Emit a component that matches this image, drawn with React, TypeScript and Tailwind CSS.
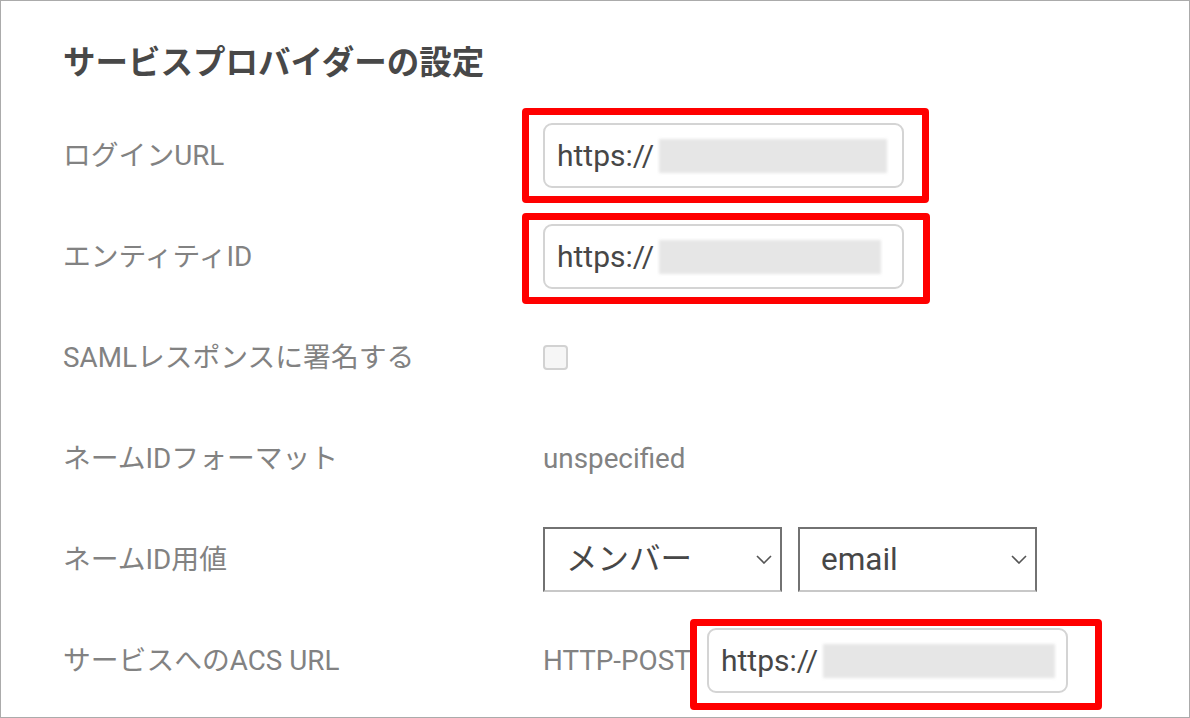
import React from 'react'

const font = { fontFamily: 'Roboto, "Noto Sans CJK JP", sans-serif' }

function Blurred({ width }: { width: number }) {
  return (
    <div className="h-[34px] bg-[#e6e6e6] blur-[1.5px]" style={{ width }} />
  )
}

function UrlInput({ blurWidth, box }: { blurWidth: number; box: string }) {
  return (
    <div className="relative w-[361px]">
      <div className="flex h-[65px] items-center gap-[5px] rounded-[9px] border-2 border-[#d4d4d4] bg-white pl-[12px]">
        <span className="text-[30px] text-[#474747]">https://</span>
        <Blurred width={blurWidth} />
      </div>
      <div className={`pointer-events-none absolute rounded-[4px] border-[7px] border-[#ff0000] ${box}`} />
    </div>
  )
}

function Chevron() {
  return (
    <svg width="16" height="9" viewBox="0 0 16 9" className="shrink-0">
      <path d="M1 1 L8 8 L15 1" fill="none" stroke="#555" strokeWidth="1.6" />
    </svg>
  )
}

function Select({ value }: { value: string }) {
  return (
    <div className="flex h-[65px] w-[239px] items-center justify-between border-2 border-b-[#c8c8c8] border-l-[#727272] border-r-[#727272] border-t-[#727272] pl-[21px] pr-[8px]">
      <span className="text-[31.5px] text-[#474747]">{value}</span>
      <Chevron />
    </div>
  )
}

function Row({ label, children }: { label: string; children?: React.ReactNode }) {
  return (
    <div className="flex h-[101px] items-center">
      <div className="w-[480px] text-[27.8px] text-[#828282]">{label}</div>
      <div className="flex items-center">{children}</div>
    </div>
  )
}

export default function App() {
  return (
    <div className="h-[718px] w-[1190px] overflow-hidden border border-[#ababab] bg-white pl-[62px] pt-[37px]" style={font}>
      <h1 className="h-[50px] text-[32.5px] font-bold leading-[50px] text-[#484848]">サービスプロバイダーの設定</h1>
      <div className="mt-[17px]">
        <Row label="ログインURL">
          <UrlInput blurWidth={228} box="-left-[21px] -top-[15px] -right-[25px] -bottom-[15px]" />
        </Row>
        <Row label="エンティティID">
          <UrlInput blurWidth={222} box="-left-[21px] -top-[11px] -right-[26px] -bottom-[15px]" />
        </Row>
        <Row label="SAMLレスポンスに署名する">
          <div className="h-[25px] w-[25px] rounded-[4px] border-2 border-[#d2d2d2] bg-[#f6f6f6]" />
        </Row>
        <Row label="ネームIDフォーマット">
          <span className="text-[27.8px] text-[#828282]">unspecified</span>
        </Row>
        <Row label="ネームID用値">
          <div className="flex gap-[16px]">
            <Select value="メンバー" />
            <Select value="email" />
          </div>
        </Row>
        <Row label="サービスへのACS URL">
          <span className="w-[164px] text-[27.8px] text-[#828282]">HTTP-POST</span>
          <UrlInput blurWidth={232} box="-left-[17px] -top-[9px] -right-[34px] -bottom-[17px]" />
        </Row>
      </div>
    </div>
  )
}
